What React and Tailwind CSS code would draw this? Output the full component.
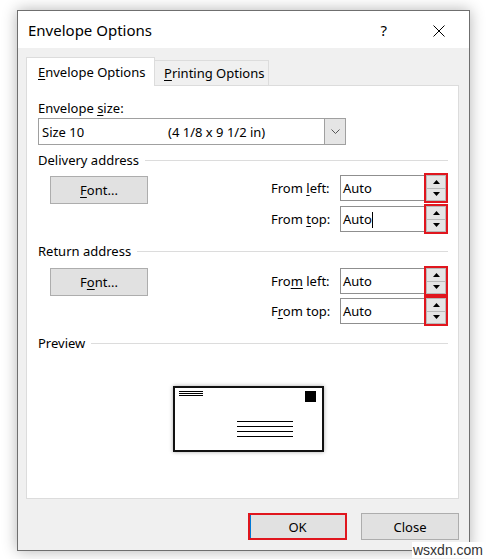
const U = ({ children }) => <span className="underline underline-offset-[2px] decoration-1">{children}</span>;

const Spin = () => (
  <div className="relative -ml-[3px] flex h-[30px] w-[24px] flex-col border-2 border-[#e0161e] bg-white">
    <div className="flex flex-1 items-center justify-center border border-[#b9b9b9] bg-[#e5e5e5]">
      <svg width="7" height="4" viewBox="0 0 7 4"><path d="M0 4L3.5 0L7 4Z" fill="#000" /></svg>
    </div>
    <div className="flex flex-1 items-center justify-center border border-t-0 border-[#b9b9b9] bg-[#e5e5e5]">
      <svg width="7" height="4" viewBox="0 0 7 4"><path d="M0 0L3.5 4L7 0Z" fill="#000" /></svg>
    </div>
  </div>
);

const Field = ({ label, cursor }) => (
  <div className="flex h-[26px] items-center">
    <div className="w-[69px] pt-[2px]">{label}</div>
    <div className="flex h-[26px] w-[87px] items-center border border-[#8f8f8f] bg-white pl-[2px] pt-[2px]">
      Auto
      {cursor && <span className="h-[16px] w-px bg-black" />}
    </div>
    <Spin />
  </div>
);

const Header = ({ children }) => (
  <div className="flex h-[18px] items-center">
    <span className="pt-[2px]">{children}</span>
    <div className="ml-[6px] h-px flex-1 bg-[#dcdcdc]" />
  </div>
);

const Btn = ({ children, className = '' }) => (
  <div className={`flex h-[28px] w-[98px] items-center justify-center border border-[#adadad] bg-[#e1e1e1] pt-[2px] ${className}`}>
    {children}
  </div>
);

const Envelope = () => (
  <div className="ml-[135px] mt-[34px] h-[66px] w-[151px] border-2 border-[#111] bg-white shadow-[0_0_4px_rgba(0,0,0,0.35)]">
    <svg width="147" height="62" viewBox="0 0 147 62">
      <g stroke="#000" strokeWidth="1">
        <path d="M4 3.5H28M4 5.5H28M4 7.5H28" />
        <path d="M62 33.5H118M62 38.5H118M62 43.5H118M62 48.5H118" />
      </g>
      <rect x="130" y="3" width="11" height="11" fill="#000" />
    </svg>
  </div>
);

export default function App() {
  return (
    <div className="relative h-[559px] w-[488px] overflow-hidden bg-white pl-[17px] pt-[10px] font-['Noto_Sans',sans-serif] text-[13px] text-black">
      <div className="flex h-[541px] w-[453px] flex-col border border-[#6f6f6f] bg-[#f0f0f0] shadow-[0_0_14px_rgba(0,0,0,0.3)]">
        {/* title bar */}
        <div className="flex h-[37px] items-center bg-white pl-[10px] pr-[24px] pt-[2px]">
          <span className="text-[15px]">Envelope Options</span>
          <span className="ml-auto text-[15px]">?</span>
          <svg className="ml-[46px]" width="12" height="12" viewBox="0 0 12 12">
            <path d="M0.5 0.5L11.5 11.5M11.5 0.5L0.5 11.5" stroke="#000" strokeWidth="1" />
          </svg>
        </div>

        <div className="flex flex-1 flex-col pl-[8px] pt-[9px]">
          {/* tabs */}
          <div className="relative z-10 flex h-[28px] items-end">
            <div className="-mb-px flex h-[29px] w-[129px] items-center border border-b-0 border-[#dcdcdc] bg-white pl-[11px] pt-[2px]">
              <span><U>E</U>nvelope Options</span>
            </div>
            <div className="flex h-[25px] w-[114px] items-center border-r border-t border-[#dcdcdc] pl-[9px] pt-[2px]">
              <span><U>P</U>rinting Options</span>
            </div>
          </div>

          {/* panel */}
          <div className="flex h-[414px] w-[433px] flex-col border border-[#dcdcdc] bg-white pl-[11px] pr-[10px] pt-[13px]">
            <div className="h-[18px] leading-[18px]">Envelope <U>s</U>ize:</div>
            <div className="mt-[1px] flex h-[27px] w-[308px] border border-[#a0a0a0]">
              <div className="flex flex-1 items-center pl-[3px] pt-[2px]">
                <span className="w-[126px]">Size 10</span>
                <span>(4 1/8 x 9 1/2 in)</span>
              </div>
              <div className="flex w-[21px] items-center justify-center border-l border-[#a0a0a0] bg-[#e5e5e5]">
                <svg width="9" height="5" viewBox="0 0 9 5">
                  <path d="M0.5 0.5L4.5 4.5L8.5 0.5" fill="none" stroke="#555" strokeWidth="1" />
                </svg>
              </div>
            </div>

            <div className="mt-[6px]">
              <Header>Delivery address</Header>
            </div>
            <div className="flex items-start">
              <Btn className="ml-[12px] mt-[7px]"><span><U>F</U>ont...</span></Btn>
              <div className="ml-auto mt-[6px] flex flex-col gap-[5px]">
                <Field label={<span>From <U>l</U>eft:</span>} />
                <Field label={<span>From <U>t</U>op:</span>} cursor />
              </div>
            </div>

            <div className="mt-[10px]">
              <Header>Return address</Header>
            </div>
            <div className="flex items-start">
              <Btn className="ml-[12px] mt-[8px]"><span>F<U>o</U>nt...</span></Btn>
              <div className="ml-auto mt-[8px] flex flex-col gap-[4px]">
                <Field label={<span>Fro<U>m</U> left:</span>} />
                <Field label={<span>F<U>r</U>om top:</span>} />
              </div>
            </div>

            <div className="mt-[10px]">
              <Header>Preview</Header>
            </div>
            <Envelope />
          </div>

          {/* buttons */}
          <div className="mt-[14px] flex justify-end gap-[14px] pr-[10px]">
            <div className="flex h-[27px] w-[99px] items-center justify-center border-2 border-[#e0161e] bg-[#e1e1e1] pt-[2px] shadow-[inset_1px_0_0_#0078d7]">
              OK
            </div>
            <div className="flex h-[27px] w-[98px] items-center justify-center border border-[#adadad] bg-[#e1e1e1] pt-[2px]">
              Close
            </div>
          </div>
        </div>
      </div>

      <div className="absolute left-[412px] top-[542px] bg-white px-[1px] font-['Liberation_Sans',sans-serif] text-[14px] leading-[16px] text-[#333]">
        wsxdn.com
      </div>
    </div>
  );
}
